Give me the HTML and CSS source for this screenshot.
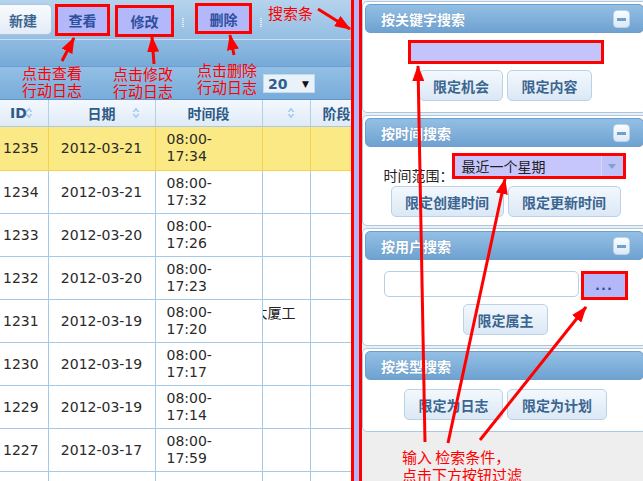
FILE: index.html
```html
<!DOCTYPE html>
<html>
<head>
<meta charset="utf-8">
<title>行动日志</title>
<link rel="stylesheet" href="styles.css">
</head>
<body>
<div class="page">
  <div class="left">
    <div class="toolbar">
      <div class="tb new">新建</div>
      <div class="tb hl b-view">查看</div>
      <div class="tb hl b-edit">修改</div>
      <span class="sep s1"></span>
      <div class="tb hl b-del">删除</div>
      <span class="sep s2"></span>
    </div>
    <div class="band"></div>
    <div class="pager">
      <div class="pgsel"><span>20</span><span class="caret">▼</span></div>
    </div>
    <table class="grid">
      <colgroup><col class="c1"><col class="c2"><col class="c3"><col class="c4"><col class="c5"></colgroup>
      <thead>
        <tr>
          <th class="th-id">ID<span class="sort"><svg width="8" height="12" viewBox="0 0 8 12"><path d="M4 0.5 L7.5 5 H5.5 L4 3 L2.5 5 H0.5Z M4 11.5 L7.5 7 H5.5 L4 9 L2.5 7 H0.5Z" fill="#a6cbec"/></svg></span></th>
          <th>日期<span class="sort"><svg width="8" height="12" viewBox="0 0 8 12"><path d="M4 0.5 L7.5 5 H5.5 L4 3 L2.5 5 H0.5Z M4 11.5 L7.5 7 H5.5 L4 9 L2.5 7 H0.5Z" fill="#a6cbec"/></svg></span></th>
          <th>时间段</th>
          <th><span class="sort"><svg width="8" height="12" viewBox="0 0 8 12"><path d="M4 0.5 L7.5 5 H5.5 L4 3 L2.5 5 H0.5Z M4 11.5 L7.5 7 H5.5 L4 9 L2.5 7 H0.5Z" fill="#a6cbec"/></svg></span></th>
          <th class="th-stage">阶段</th>
        </tr>
      </thead>
      <tbody>
        <tr class="sel first"><td class="id">1235</td><td class="date">2012-03-21</td><td class="time">08:00-<br>17:34</td><td></td><td></td></tr>
        <tr><td class="id">1234</td><td class="date">2012-03-21</td><td class="time">08:00-<br>17:32</td><td></td><td></td></tr>
        <tr><td class="id">1233</td><td class="date">2012-03-20</td><td class="time">08:00-<br>17:26</td><td></td><td></td></tr>
        <tr><td class="id">1232</td><td class="date">2012-03-20</td><td class="time">08:00-<br>17:23</td><td></td><td></td></tr>
        <tr><td class="id">1231</td><td class="date">2012-03-19</td><td class="time">08:00-<br>17:20</td><td class="phase"><div class="clip">大厦工<br>&nbsp;</div></td><td></td></tr>
        <tr><td class="id">1230</td><td class="date">2012-03-19</td><td class="time">08:00-<br>17:17</td><td></td><td></td></tr>
        <tr><td class="id">1229</td><td class="date">2012-03-19</td><td class="time">08:00-<br>17:14</td><td></td><td></td></tr>
        <tr><td class="id">1227</td><td class="date">2012-03-17</td><td class="time">08:00-<br>17:59</td><td></td><td></td></tr>
        <tr class="last"><td class="id">1226</td><td class="date">2012-03-16</td><td class="time">08:00-<br>17:50</td><td class="phase"><div class="clip">保安活<br>&nbsp;</div></td><td></td></tr>
      </tbody>
    </table>
  </div>

  <div class="splitter"></div>

  <div class="right">
    <div class="panel">
      <div class="phead"><span class="ptitle">按关键字搜索</span><span class="collapse"></span></div>
      <div class="pbody b1">
        <div class="kw"></div>
        <div class="btnrow"><div class="fbtn w84">限定机会</div><div class="fbtn w85">限定内容</div></div>
      </div>
    </div>
    <div class="panel">
      <div class="phead"><span class="ptitle">按时间搜索</span><span class="collapse"></span></div>
      <div class="pbody b2">
        <div class="timerow">
          <span class="lbl">时间范围：</span>
          <div class="selbox"><span class="seltext">最近一个星期</span><span class="seldrop"><svg width="8" height="5" viewBox="0 0 8 5"><path d="M0 0H8L4 5Z" fill="#7f9fd6"/></svg></span></div>
        </div>
        <div class="btnrow r2"><div class="fbtn w113">限定创建时间</div><div class="fbtn w113">限定更新时间</div></div>
      </div>
    </div>
    <div class="panel">
      <div class="phead"><span class="ptitle">按用户搜索</span><span class="collapse"></span></div>
      <div class="pbody b3">
        <div class="userrow"><div class="uin"></div><div class="dots">...</div></div>
        <div class="btnrow r3"><div class="fbtn w85">限定属主</div></div>
      </div>
    </div>
    <div class="panel">
      <div class="phead"><span class="ptitle">按类型搜索</span></div>
      <div class="pbody b4">
        <div class="btnrow"><div class="fbtn w99">限定为日志</div><div class="fbtn w100">限定为计划</div></div>
      </div>
    </div>
  </div>
</div>

<div class="note n-view">点击查看<br>行动日志</div>
<div class="note n-edit">点击修改<br>行动日志</div>
<div class="note n-del">点击删除<br>行动日志</div>
<div class="note n-bar">搜索条</div>
<div class="note n-input">输入 检索条件，<br>点击下方按钮过滤</div>

<svg class="arrows" width="643" height="481" viewBox="0 0 643 481">
  <defs>
    <marker id="ah" markerUnits="userSpaceOnUse" markerWidth="16" markerHeight="12" refX="15" refY="6" orient="auto">
      <path d="M0 0 L16 6 L0 12 Z" fill="#f00"/>
    </marker>
  </defs>
  <g stroke="#f00" stroke-width="3" fill="none" marker-end="url(#ah)">
    <line x1="62" y1="61" x2="74" y2="38"/>
    <line x1="154" y1="64" x2="152" y2="37"/>
    <line x1="234" y1="55" x2="230" y2="35"/>
    <line x1="318" y1="9" x2="350" y2="29"/>
    <line x1="425" y1="442" x2="418" y2="66"/>
    <line x1="448" y1="443" x2="505" y2="179"/>
    <line x1="480" y1="440" x2="586" y2="307"/>
  </g>
</svg>
</body>
</html>
```

FILE: styles.css
```css
* { box-sizing: border-box; }
html, body { margin: 0; padding: 0; }
body {
  width: 643px;
  height: 481px;
  overflow: hidden;
  position: relative;
  background: #fff;
  font-family: "Noto Sans CJK SC", "DejaVu Sans", sans-serif;
  font-size: 14px;
}
.page { display: flex; height: 481px; }

/* ---------- left ---------- */
.left { width: 351px; flex: none; overflow: hidden; background: #fff; }
.toolbar {
  height: 40px;
  display: flex;
  align-items: flex-start;
  background: linear-gradient(#b6d3ed, #94bee3);
  border-bottom: 1px solid #c9def2;
}
.tb {
  flex: none;
  display: flex;
  align-items: center;
  justify-content: center;
  font-weight: bold;
  font-size: 14px;
}
.new {
  margin-left: -6px; margin-top: 4px; width: 58px; height: 31px;
  border: 1px solid #a9c6e3; border-radius: 5px;
  background: linear-gradient(#f8fbfe, #e2ecf7);
  color: #3d6690;
}
.hl { border: 3px solid #f00; background: #b3b8fa; color: #2f4f9e; }
.b-view { margin-left: 3px; margin-top: 4px; width: 55px; height: 32px; }
.b-edit { margin-left: 5px; margin-top: 5px; width: 59px; height: 32px; }
.b-del { margin-left: 11px; margin-top: 3px; width: 57px; height: 31px; }
.sep {
  flex: none; width: 2px; height: 10px; margin-top: 18px;
  background: repeating-linear-gradient(#e6f0fa 0 1px, transparent 1px 2px);
}
.s1 { margin-left: 8px; }
.s2 { margin-left: 8px; }
.band {
  height: 27px;
  background: linear-gradient(#8fbbe2, #77aad8);
  border-bottom: 1px solid #6b9fcf;
}
.pager {
  height: 33px;
  padding-left: 263px;
  padding-top: 7px;
  background: linear-gradient(#92bfe5, #79acda);
  border-bottom: 1px solid #5f95c7;
}
.pgsel {
  width: 52px; height: 19px;
  display: flex; align-items: center; justify-content: space-between;
  padding: 0 5px 0 4px;
  background: #e9f1f9;
  border: 1px solid #c5d9ec;
  font: bold 14px "DejaVu Sans", sans-serif;
  color: #2f5d8c;
}
.caret { font-size: 9px; color: #111; }

.grid {
  table-layout: fixed;
  border-collapse: collapse;
  width: 370px;
  font-family: "DejaVu Sans", "Noto Sans CJK SC", sans-serif;
  font-size: 14px;
  color: #2a2a2a;
}
.c1 { width: 48px; } .c2 { width: 107px; } .c3 { width: 107px; } .c4 { width: 48px; } .c5 { width: 60px; }
.grid th {
  position: relative;
  height: 26px;
  padding: 0;
  background: linear-gradient(#f3f8fd, #dfebf7);
  border-right: 1px solid #b3d0ea;
  border-bottom: 1px solid #a9c9e6;
  color: #2e5a86;
  font-weight: bold;
  text-align: center;
  white-space: nowrap;
}
.grid th.th-id { text-align: left; padding-left: 10px; }
.grid th.th-stage { text-align: left; padding-left: 12px; }
.sort { position: absolute; right: 15px; top: 7px; line-height: 0; }
.grid td {
  height: 43px;
  padding: 0;
  border-right: 1px solid #a6c9e8;
  border-bottom: 1px solid #a6c9e8;
  vertical-align: middle;
  white-space: nowrap;
  overflow: hidden;
}
.grid tr.first td { height: 44px; }
.grid td.id { padding-left: 3px; }
.grid td.date { text-align: center; }
.grid td.time { padding-left: 11px; line-height: 17px; }
.grid td.phase { font-family: "Noto Sans CJK SC", sans-serif; line-height: 18px; }
.clip { margin-left: -9px; color: #222; }
.grid tr.sel td { background: #fbe985; border-color: #f5d24a; }
.grid tr.last td.time, .grid tr.last td.phase { vertical-align: top; padding-top: 7px; }

/* ---------- splitter ---------- */
.splitter {
  flex: none; width: 11px;
  border-left: 3px solid #f00;
  border-right: 3px solid #f00;
  background: #b4b6f8;
}

/* ---------- right ---------- */
.right {
  flex: 1;
  min-width: 0;
  background: #eeeeee;
  padding-top: 1px;
  overflow: hidden;
}
.panel {
  margin-right: -4px;
  margin-bottom: 2px;
  padding: 2px 0 0 2px;
  background: #fff;
  border: 1px solid #a9c8e6;
  border-radius: 5px;
}
.phead {
  height: 29px;
  margin-right: 2px;
  display: flex;
  align-items: center;
  justify-content: space-between;
  padding: 0 13px 0 15px;
  border: 1px solid #6c9fcd;
  border-radius: 5px;
  background: linear-gradient(#93bfe4, #6fa2d1);
}
.ptitle {
  color: #fff;
  font-weight: bold;
  font-size: 14px;
  text-shadow: 0 0 1px rgba(40, 80, 120, .4);
}
.collapse {
  position: relative;
  width: 17px; height: 18px;
  border-radius: 4px;
  background: linear-gradient(#fbfdff, #dce9f6);
  border: 1px solid #bcd3ea;
}
.collapse::after {
  content: "";
  position: absolute;
  left: 3px; top: 7px;
  width: 9px; height: 3px;
  background: #6d9fd0;
}
.pbody { display: flex; flex-direction: column; align-items: center; }
.b1 { height: 79px; padding-top: 7px; }
.b2 { height: 78px; padding-top: 6px; }
.b3 { height: 85px; padding-top: 11px; }
.b4 { height: 51px; padding-top: 9px; }

.kw {
  width: 196px; height: 24px;
  border: 3px solid #f00;
  background: #c4c4fc;
}
.btnrow { display: flex; gap: 4px; margin-top: 6px; }
.r2 { margin-top: 7px; }
.r3 { margin-top: 4px; }
.b4 .btnrow { margin-top: 0; }
.fbtn {
  height: 31px;
  display: flex; align-items: center; justify-content: center;
  border: 1px solid #b9d2ea;
  border-radius: 5px;
  background: linear-gradient(#f3f8fd, #dbe8f5);
  color: #3a6590;
  font-weight: bold;
  font-size: 14px;
}
.w84 { width: 84px; } .w85 { width: 85px; } .w99 { width: 99px; } .w100 { width: 100px; } .w113 { width: 113px; }

.timerow { display: flex; align-items: flex-end; margin-left: -2px; }
.lbl {
  flex: none;
  width: 68px;
  white-space: nowrap;
  color: #222;
  font-size: 14px;
  line-height: 18px;
  margin-bottom: -5px;
}
.selbox {
  flex: none;
  width: 174px; height: 26px;
  display: flex; align-items: stretch;
  border: 3px solid #f00;
  background: #c6c6fc;
}
.seltext { flex: 1; padding-left: 7px; line-height: 20px; color: #1e1e1e; font-size: 14px; }
.seldrop {
  width: 22px;
  display: flex; align-items: center; justify-content: center;
  border-left: 1px solid #d6d8fb;
  background: #bfc2f7;
}

.userrow { display: flex; align-items: flex-start; gap: 2px; }
.uin {
  width: 195px; height: 26px;
  border: 1px solid #b5cfe8;
  border-radius: 5px;
  background: #fff;
}
.dots {
  width: 47px; height: 29px;
  display: flex; align-items: center; justify-content: center;
  border: 3px solid #f00;
  background: #b4b8f8;
  color: #2d4fa6;
  font: bold 13px "DejaVu Sans", sans-serif;
  letter-spacing: 1px;
}

/* ---------- annotations ---------- */
.note {
  position: absolute;
  color: #f00;
  font-family: "Noto Sans CJK SC", sans-serif;
  font-size: 15px;
  line-height: 17px;
  white-space: nowrap;
}
.n-view { left: 22px; top: 64px; }
.n-edit { left: 113px; top: 65px; }
.n-del { left: 197px; top: 61px; }
.n-bar { left: 268px; top: 4px; }
.n-input { left: 402px; top: 448px; line-height: 18px; }
.arrows { position: absolute; left: 0; top: 0; pointer-events: none; }
```
